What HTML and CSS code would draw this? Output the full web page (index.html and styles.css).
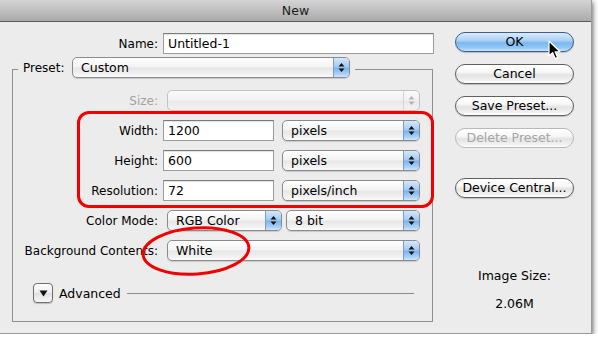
FILE: index.html
```html
<!DOCTYPE html>
<html>
<head>
<meta charset="utf-8">
<link rel="stylesheet" href="styles.css">
</head>
<body>
<div class="window">
  <div class="titlebar">New</div>
  <div class="content">
    <div class="main">
      <div class="name-row">
        <span class="lbl">Name:</span>
        <div class="field name-field">Untitled-1</div>
      </div>
      <fieldset class="group">
        <legend class="legend">
          <span class="legend-lbl">Preset:</span>
          <div class="popup preset-popup"><span class="ptext">Custom</span><span class="stepper"><svg class="arr" width="7" height="11" viewBox="0 0 7 11"><path d="M3.5 1L6.5 4.5H0.5Z M3.5 10L6.5 6.5H0.5Z"/></svg></span></div>
        </legend>
        <div class="grid">
          <span class="lbl disabled">Size:</span>
          <div class="popup off wide"><span class="ptext"></span><span class="stepper"><svg class="arr" width="7" height="11" viewBox="0 0 7 11"><path d="M3.5 1L6.5 4.5H0.5Z M3.5 10L6.5 6.5H0.5Z"/></svg></span></div>

          <span class="lbl">Width:</span>
          <div class="field num">1200</div>
          <div class="popup"><span class="ptext">pixels</span><span class="stepper"><svg class="arr" width="7" height="11" viewBox="0 0 7 11"><path d="M3.5 1L6.5 4.5H0.5Z M3.5 10L6.5 6.5H0.5Z"/></svg></span></div>

          <span class="lbl">Height:</span>
          <div class="field num">600</div>
          <div class="popup"><span class="ptext">pixels</span><span class="stepper"><svg class="arr" width="7" height="11" viewBox="0 0 7 11"><path d="M3.5 1L6.5 4.5H0.5Z M3.5 10L6.5 6.5H0.5Z"/></svg></span></div>

          <span class="lbl">Resolution:</span>
          <div class="field num">72</div>
          <div class="popup"><span class="ptext">pixels/inch</span><span class="stepper"><svg class="arr" width="7" height="11" viewBox="0 0 7 11"><path d="M3.5 1L6.5 4.5H0.5Z M3.5 10L6.5 6.5H0.5Z"/></svg></span></div>

          <span class="lbl">Color Mode:</span>
          <div class="popup inset"><span class="ptext">RGB Color</span><span class="stepper"><svg class="arr" width="7" height="11" viewBox="0 0 7 11"><path d="M3.5 1L6.5 4.5H0.5Z M3.5 10L6.5 6.5H0.5Z"/></svg></span></div>
          <div class="popup inset"><span class="ptext">8 bit</span><span class="stepper"><svg class="arr" width="7" height="11" viewBox="0 0 7 11"><path d="M3.5 1L6.5 4.5H0.5Z M3.5 10L6.5 6.5H0.5Z"/></svg></span></div>

          <span class="lbl">Background Contents:</span>
          <div class="popup wide"><span class="ptext">White</span><span class="stepper"><svg class="arr" width="7" height="11" viewBox="0 0 7 11"><path d="M3.5 1L6.5 4.5H0.5Z M3.5 10L6.5 6.5H0.5Z"/></svg></span></div>
        </div>
        <div class="advanced">
          <span class="disclosure"><svg width="9" height="7" viewBox="0 0 9 7"><path d="M0.5 0.5H8.5L4.5 6.5Z"/></svg></span>
          <span class="adv-text">Advanced</span>
          <span class="adv-line"></span>
        </div>
      </fieldset>
    </div>
    <div class="side">
      <div class="btn default">OK</div>
      <div class="btn">Cancel</div>
      <div class="btn">Save Preset...</div>
      <div class="btn disabled">Delete Preset...</div>
      <div class="btn device">Device Central...</div>
      <div class="size-label">Image Size:</div>
      <div class="size-value">2.06M</div>
    </div>
  </div>
  <div class="highlight-box"></div>
  <svg class="ellipse" width="130" height="64" viewBox="0 0 130 64"><ellipse cx="65" cy="32" rx="53" ry="23" transform="rotate(-4 65 32)"/></svg>
  <svg class="cursor" width="14" height="20" viewBox="0 0 14 20"><path d="M1 1V16L4.6 12.6L7.2 18.6L9.6 17.6L7.1 11.8H12Z"/></svg>
</div>
</body>
</html>
```
FILE: styles.css
```css
* { box-sizing: border-box; }
body {
  margin: 0;
  background: #fff;
  font-family: "DejaVu Sans", "Noto Sans", sans-serif;
  font-size: 12px;
  color: #000;
}
.window {
  position: relative;
  width: 592px;
  height: 334px;
  background: #ececec;
  border-right: 1px solid #9a9a9a;
  border-bottom: 1px solid #9a9a9a;
  box-shadow: 1px 2px 5px rgba(0, 0, 0, 0.6);
}
.titlebar {
  height: 22px;
  background: linear-gradient(#d4d4d4, #aaaaaa);
  border-bottom: 1px solid #5c5c5c;
  text-align: center;
  line-height: 21px;
  font-size: 12.5px;
  color: #1c1c1c;
}
.content {
  display: flex;
  gap: 20px;
  padding: 11px 0 0 12px;
}
.main { width: 423px; }
.name-row {
  display: flex;
  align-items: center;
  height: 21px;
}
.lbl {
  text-align: right;
  padding-right: 5px;
  white-space: nowrap;
  align-self: center;
}
.name-row .lbl { width: 151px; }
.lbl.disabled { color: #a3a3a3; }
.field {
  height: 21px;
  background: #fff;
  border: 1px solid #9d9d9d;
  border-top-color: #7b7b7b;
  box-shadow: inset 0 1px 1px rgba(0, 0, 0, 0.12);
  padding-left: 4px;
  line-height: 19px;
  font-size: 12.5px;
}
.name-field { width: 271px; }
.field.num { width: 111px; }
.group {
  margin: 3px 0 0;
  padding: 0 0 18px;
  width: 421px;
  border: 1px solid #8f8f8f;
  min-width: 0;
}
.legend {
  margin-left: 5px;
  padding: 0 5px 3px 5px;
  display: flex;
  align-items: center;
  gap: 7px;
}
.legend-lbl { width: 42px; }
.preset-popup { width: 278px; }
.popup {
  display: flex;
  height: 21px;
  border: 1px solid #8b8b8b;
  border-radius: 5px;
  background: linear-gradient(#fefefe, #f3f3f3 48%, #e6e6e6 52%, #f2f2f2 85%, #fbfbfb);
  box-shadow: 0 1px 1px rgba(0, 0, 0, 0.15);
  overflow: hidden;
}
.ptext {
  flex: 1;
  padding-left: 8px;
  line-height: 19px;
  font-size: 12.5px;
  white-space: nowrap;
}
.stepper {
  width: 16px;
  border-left: 1px solid #7d9cc4;
  background: linear-gradient(#d4e8fb, #a3cbf3 45%, #7fb5ec 55%, #a9d2f8 85%, #cfe6fc);
  display: flex;
  align-items: center;
  justify-content: center;
}
.arr { fill: #111; }
.popup.off {
  border-color: #c2c2c2;
  box-shadow: none;
  background: linear-gradient(#fafafa, #f1f1f1 50%, #e9e9e9 52%, #f2f2f2);
}
.popup.off .stepper {
  background: transparent;
  border-left-color: #d4d4d4;
}
.popup.off .arr { fill: #b3b3b3; }
.grid {
  display: grid;
  grid-template-columns: 150px 119px 138px;
  grid-auto-rows: 21px;
  row-gap: 9px;
  margin-top: 9px;
}
.popup.wide {
  grid-column: 2 / span 2;
  margin-left: 4px;
}
.popup.inset { margin-left: 4px; }
.grid .field + .popup { margin-left: 0; }
.advanced {
  display: flex;
  align-items: center;
  margin-top: 22px;
  padding-left: 20px;
  padding-right: 18px;
  height: 20px;
}
.disclosure {
  width: 20px;
  height: 20px;
  border: 1px solid #6f6f6f;
  border-radius: 4px;
  background: linear-gradient(#ffffff, #ededed 50%, #e0e0e0 52%, #f7f7f7);
  box-shadow: 0 1px 1px rgba(0, 0, 0, 0.2);
  display: flex;
  align-items: center;
  justify-content: center;
}
.disclosure svg { fill: #111; }
.adv-text { margin-left: 6px; font-size: 12.5px; }
.adv-line {
  flex: 1;
  height: 1px;
  background: #8a8a8a;
  margin-left: 6px;
}
.side {
  width: 119px;
  display: flex;
  flex-direction: column;
  margin-top: -1px;
}
.btn {
  height: 20px;
  border-radius: 10px;
  border: 1px solid #606060;
  background: linear-gradient(#ffffff, #f7f7f7 40%, #e3e3e3 55%, #f1f1f1 85%, #ffffff);
  box-shadow: 0 1px 1px rgba(0, 0, 0, 0.2);
  text-align: center;
  line-height: 18px;
  font-size: 12.5px;
  margin-bottom: 12px;
}
.btn.default {
  border-color: #3d5f8e;
  background: linear-gradient(#d9ebfc, #aed3f6 40%, #7cb7ef 55%, #8ec6f5 80%, #c9e5fd);
}
.btn.disabled {
  border-color: #b9b9b9;
  color: #a6a6a6;
  box-shadow: none;
  margin-bottom: 30px;
}
.size-label {
  margin-top: 58px;
  text-align: center;
  line-height: 16px;
  font-size: 12.5px;
}
.size-value {
  margin-top: 12px;
  text-align: center;
  line-height: 16px;
  font-size: 12.5px;
}
.highlight-box {
  position: absolute;
  left: 77px;
  top: 111px;
  width: 357px;
  height: 97px;
  border: 3px solid #f20000;
  border-radius: 12px;
}
.ellipse {
  position: absolute;
  left: 131px;
  top: 219px;
}
.ellipse ellipse {
  fill: none;
  stroke: #f20000;
  stroke-width: 3;
}
.cursor {
  position: absolute;
  left: 548px;
  top: 40px;
}
.cursor path {
  fill: #000;
  stroke: #fff;
  stroke-width: 1.2;
  stroke-linejoin: round;
}
```
